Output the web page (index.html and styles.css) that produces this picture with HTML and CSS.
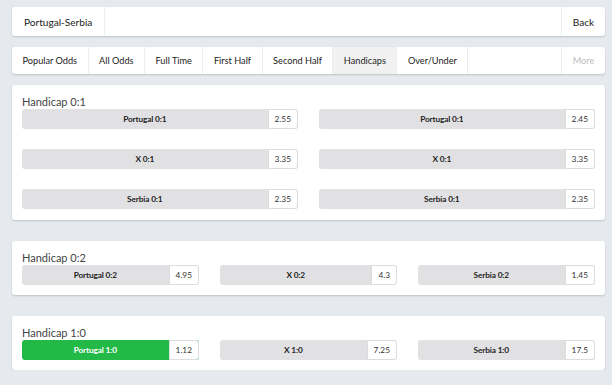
FILE: index.html
```html
<!DOCTYPE html>
<html>
<head>
<meta charset="utf-8">
<link rel="stylesheet" href="styles.css">
</head>
<body>
<div class="page">
  <div class="card header">
    <div class="title">Portugal-Serbia</div>
    <div class="spacer"></div>
    <div class="back">Back</div>
  </div>
  <div class="card tabs">
    <div class="tab">Popular Odds</div>
    <div class="tab">All Odds</div>
    <div class="tab">Full Time</div>
    <div class="tab">First Half</div>
    <div class="tab">Second Half</div>
    <div class="tab active">Handicaps</div>
    <div class="tab">Over/Under</div>
    <div class="spacer"></div>
    <div class="tab more">More</div>
  </div>

  <div class="card market m1">
    <div class="heading">Handicap 0:1</div>
    <div class="grid two">
      <div class="bet"><span class="label">Portugal 0:1</span><span class="odd">2.55</span></div>
      <div class="bet"><span class="label">Portugal 0:1</span><span class="odd">2.45</span></div>
      <div class="bet"><span class="label">X 0:1</span><span class="odd">3.35</span></div>
      <div class="bet"><span class="label">X 0:1</span><span class="odd">3.35</span></div>
      <div class="bet"><span class="label">Serbia 0:1</span><span class="odd">2.35</span></div>
      <div class="bet"><span class="label">Serbia 0:1</span><span class="odd">2.35</span></div>
    </div>
  </div>

  <div class="card market">
    <div class="heading">Handicap 0:2</div>
    <div class="grid three">
      <div class="bet"><span class="label">Portugal 0:2</span><span class="odd">4.95</span></div>
      <div class="bet"><span class="label">X 0:2</span><span class="odd">4.3</span></div>
      <div class="bet"><span class="label">Serbia 0:2</span><span class="odd">1.45</span></div>
    </div>
  </div>

  <div class="card market">
    <div class="heading">Handicap 1:0</div>
    <div class="grid three">
      <div class="bet selected"><span class="label">Portugal 1:0</span><span class="odd">1.12</span></div>
      <div class="bet"><span class="label">X 1:0</span><span class="odd">7.25</span></div>
      <div class="bet"><span class="label">Serbia 1:0</span><span class="odd">17.5</span></div>
    </div>
  </div>
</div>
</body>
</html>
```
FILE: styles.css
```css
html, body {
  margin: 0;
  padding: 0;
  background: #e6eaee;
  font-family: Lato, "Open Sans", sans-serif;
  color: #222;
}
.page {
  padding: 7px 7px 0 12px;
  display: flex;
  flex-direction: column;
}
.card {
  background: #fff;
  border-radius: 3px;
  box-shadow: 0 1px 2px rgba(0, 0, 0, 0.18);
}
.header {
  display: flex;
  height: 29px;
  font-size: 10.1px;
}
.header .title {
  display: flex;
  align-items: center;
  padding: 0 12px;
  white-space: nowrap;
  border-right: 1px solid #eceff2;
}
.spacer { flex: 1; }
.header .back {
  display: flex;
  align-items: center;
  justify-content: center;
  width: 43px;
  border-left: 1px solid #eceff2;
}
.tabs {
  display: flex;
  height: 27px;
  margin-top: 11px;
  font-size: 9.2px;
  color: #222;
}
.tab {
  display: flex;
  align-items: center;
  justify-content: center;
  padding: 0 10.5px;
  white-space: nowrap;
  border-right: 1px solid #eceff2;
}
.tab.active { background: #f1f1f1; }
.tab.more {
  color: #bdbdbd;
  border-right: none;
  border-left: 1px solid #eceff2;
  width: 22px;
}
.market {
  margin-top: 11px;
  padding: 10px 10px 10px;
}
.m1 + .market, .market + .market { margin-top: 21px; }
.m1 { padding-bottom: 11px; }
.heading {
  font-size: 11px;
  line-height: 14px;
  height: 14px;
  color: #444;
}
.grid {
  display: grid;
  column-gap: 21px;
  row-gap: 20px;
}
.grid.two { grid-template-columns: 1fr 1fr; }
.grid.three { grid-template-columns: 1fr 1fr 1fr; }
.bet {
  display: flex;
  height: 20px;
  border-radius: 3px;
  background: #e1e1e3;
  font-size: 8.3px;
  line-height: 18px;
}
.bet .label {
  flex: 1;
  text-align: center;
  font-weight: bold;
  color: #1e1e1e;
  line-height: 20px;
  letter-spacing: -0.15px;
}
.bet .odd {
  background: #fff;
  border: 1px solid #dcdcdf;
  border-radius: 0 3px 3px 0;
  padding: 0 6px;
  color: #333;
}
.bet.selected { background: #22b947; }
.bet.selected .label { color: #fff; }
```
